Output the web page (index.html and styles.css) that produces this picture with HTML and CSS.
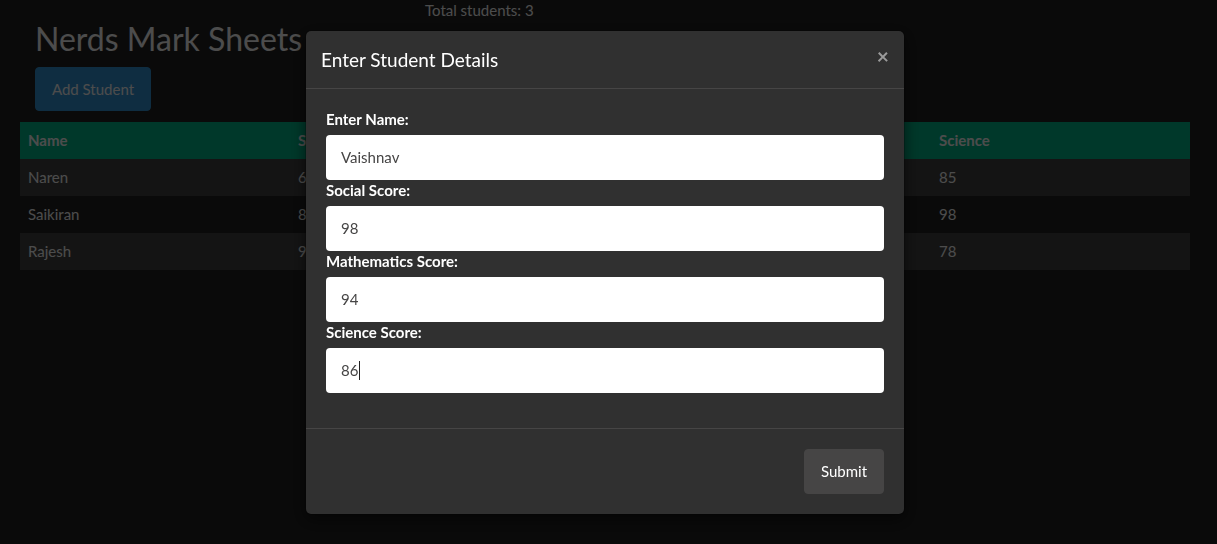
FILE: index.html
```html
<!DOCTYPE html>
<html lang="en">
<head>
<meta charset="utf-8">
<title>Nerds Mark Sheets</title>
<link rel="stylesheet" href="styles.css">
</head>
<body>
<div class="page">
  <p class="total">Total students: 3</p>
  <h1 class="title">Nerds Mark Sheets</h1>
  <button class="btn btn-info add-btn" type="button">Add Student</button>
  <table class="marks">
    <colgroup>
      <col class="c1"><col class="c2"><col class="c3"><col class="c4">
    </colgroup>
    <thead>
      <tr><th>Name</th><th>Social</th><th>Mathematics</th><th>Science</th></tr>
    </thead>
    <tbody>
      <tr class="odd"><td>Naren</td><td>65</td><td>78</td><td>85</td></tr>
      <tr><td>Saikiran</td><td>88</td><td>92</td><td>98</td></tr>
      <tr class="odd"><td>Rajesh</td><td>91</td><td>84</td><td>78</td></tr>
    </tbody>
  </table>
</div>

<div class="backdrop"></div>

<div class="modal">
  <div class="modal-header">
    <h4 class="modal-title">Enter Student Details</h4>
    <button class="close" type="button">&times;</button>
  </div>
  <div class="modal-body">
    <form class="student-form">
      <label class="field-label">Enter Name:</label>
      <div class="form-control">Vaishnav</div>
      <label class="field-label">Social Score:</label>
      <div class="form-control">98</div>
      <label class="field-label">Mathematics Score:</label>
      <div class="form-control">94</div>
      <label class="field-label">Science Score:</label>
      <div class="form-control">86<span class="caret"></span></div>
    </form>
  </div>
  <div class="modal-footer">
    <button class="btn btn-default" type="button">Submit</button>
  </div>
</div>
</body>
</html>
```

FILE: styles.css
```css
* { box-sizing: border-box; }

html, body {
  margin: 0;
  padding: 0;
}

body {
  background: #222222;
  color: #ffffff;
  font-family: "Lato", "Open Sans", sans-serif;
  font-size: 15px;
  line-height: 21px;
  width: 1217px;
  height: 544px;
  overflow: hidden;
}

.page {
  padding: 0 27px 0 20px;
}

.total {
  margin: 0 0 0 405px;
  line-height: 20px;
  height: 21px;
  padding-top: 0;
}

.title {
  margin: 0 0 10px 15px;
  font-size: 32px;
  line-height: 36px;
  font-weight: 400;
}

.btn {
  font-family: inherit;
  font-size: 15px;
  line-height: 21px;
  border-radius: 4px;
  cursor: pointer;
}

.add-btn {
  margin-left: 15px;
  display: block;
  width: 116px;
  height: 44px;
  padding: 0;
  text-align: center;
  background: #3498db;
  border: 1px solid #3498db;
  color: #ffffff;
}

.marks {
  margin-top: 11px;
  width: 1170px;
  border-collapse: collapse;
  table-layout: fixed;
}

.c1 { width: 270px; }
.c2 { width: 320px; }
.c3 { width: 321px; }
.c4 { width: 259px; }

.marks th,
.marks td {
  padding: 8px;
  text-align: left;
  line-height: 21px;
  height: 37px;
}

.marks thead tr {
  background: #00bc8c;
}

.marks th {
  font-weight: 700;
}

.marks tr.odd {
  background: #454545;
}

.backdrop {
  position: fixed;
  inset: 0;
  background: rgba(0, 0, 0, 0.7);
}

.modal {
  position: fixed;
  top: 30px;
  left: 305px;
  width: 600px;
  background: #303030;
  border: 1px solid rgba(0, 0, 0, 0.2);
  border-radius: 6px;
  box-shadow: 0 5px 15px rgba(0, 0, 0, 0.5);
  background-clip: padding-box;
}

.modal-header {
  display: flex;
  justify-content: space-between;
  align-items: flex-start;
  padding: 15px;
  border-bottom: 1px solid #464545;
}

.modal-title {
  margin: 0;
  font-size: 19px;
  line-height: 27px;
  font-weight: 400;
  color: #ffffff;
}

.close {
  background: none;
  border: 0;
  padding: 0;
  margin: 0;
  font-family: inherit;
  font-size: 21px;
  font-weight: 700;
  line-height: 20px;
  color: #9a9a9a;
  cursor: pointer;
}

.modal-body {
  padding: 20px;
}

.student-form {
  margin: 0 0 15px;
}

.field-label {
  display: block;
  font-weight: 700;
  margin-bottom: 5px;
  line-height: 21px;
  color: #ffffff;
}

.form-control {
  height: 45px;
  padding: 10px 15px;
  background: #ffffff;
  border-radius: 4px;
  color: #464545;
  font-size: 15px;
  line-height: 25px;
}

.caret {
  display: inline-block;
  width: 1px;
  height: 19px;
  background: #222;
  vertical-align: -4px;
  margin-left: 1px;
}

.modal-footer {
  padding: 20px;
  border-top: 1px solid #464545;
  display: flex;
  justify-content: flex-end;
}

.btn-default {
  width: 80px;
  height: 45px;
  padding: 0;
  text-align: center;
  background: #464545;
  border: 1px solid #464545;
  color: #ffffff;
}
```
